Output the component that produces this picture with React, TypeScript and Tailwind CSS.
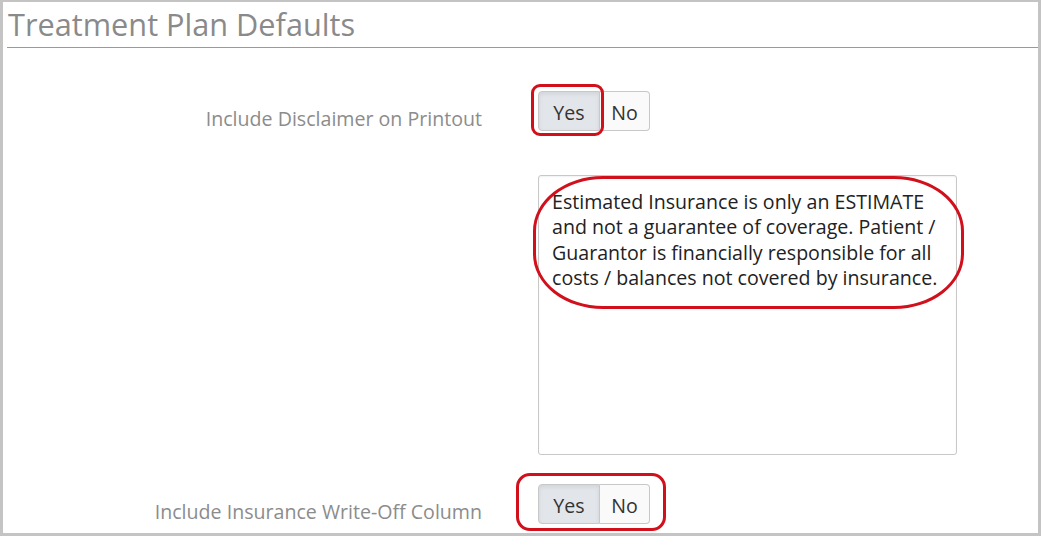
import React from "react";

function YesNo({ yes }: { yes: boolean }) {
    return (
        <div className="flex h-[40px] text-[19.6px] text-[#333]">
            <button
                className={`w-[62px] h-full pt-[3px] rounded-l-[4px] border border-[#c8c8c8] ${yes ? "bg-[#e2e5ea] shadow-[inset_0_2px_4px_rgba(0,0,0,0.08)]" : "bg-[#fafafa]"}`}
            >
                Yes
            </button>
            <button
                className={`w-[50px] h-full pt-[3px] rounded-r-[4px] border border-l-0 border-[#c8c8c8] ${!yes ? "bg-[#e2e5ea]" : "bg-[#fafafa]"}`}
            >
                No
            </button>
        </div>
    );
}

export default function App() {
    return (
        <div className="relative h-[536px] overflow-hidden bg-white border-[3px] border-t-2 border-[#c4c4c4] font-['Open_Sans',sans-serif]">
            <h1 className="ml-[4px] pl-[1px] pt-[2px] pb-[2px] text-[30.7px] leading-[41px] text-[#8a8a8a] border-b-[1.5px] border-[#9a9a9a]">
                Treatment Plan Defaults
            </h1>

            {/* Disclaimer toggle */}
            <div className="flex items-start mt-[43px]">
                <div className="w-[479px] pt-[15px] text-right text-[19.6px] leading-[25px] text-[#8c8c8c]">
                    Include Disclaimer on Printout
                </div>
                <div className="relative ml-[56px]">
                    <YesNo yes />
                    <div className="absolute left-[-7px] top-[-7px] w-[73px] h-[52px] rounded-[9px] border-[3px] border-[#d1101c]" />
                </div>
            </div>

            {/* Disclaimer text */}
            <div className="relative ml-[535px] mt-[44px] w-[419px] h-[280px] rounded-[3px] border border-[#c8c8c8] px-[13px] pt-[13px] text-[19.6px] leading-[25.3px] text-[#222] whitespace-nowrap shadow-[inset_0_1px_2px_rgba(0,0,0,0.06)]">
                Estimated Insurance is only an ESTIMATE
                <br />
                and not a guarantee of coverage. Patient /
                <br />
                Guarantor is financially responsible for all
                <br />
                costs / balances not covered by insurance.
                <div className="absolute left-[-6px] top-[0px] w-[431px] h-[133px] rounded-[70px/55px] border-[3px] border-[#d1101c]" />
            </div>

            {/* Write-off toggle */}
            <div className="flex items-start mt-[29px]">
                <div className="w-[479px] pt-[15px] text-right text-[19.6px] leading-[25px] text-[#8c8c8c]">
                    Include Insurance Write-Off Column
                </div>
                <div className="relative ml-[56px]">
                    <YesNo yes />
                    <div className="absolute left-[-22px] top-[-11px] w-[150px] h-[58px] rounded-[14px] border-[3px] border-[#d1101c]" />
                </div>
            </div>
        </div>
    );
}
